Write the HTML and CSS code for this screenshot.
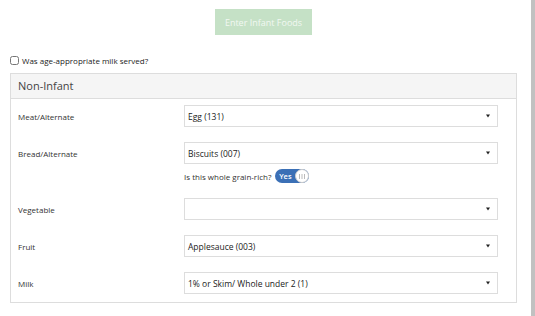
FILE: index.html
```html
<!DOCTYPE html>
<html lang="en">
<head>
    <meta charset="UTF-8">
    <meta name="viewport" content="width=device-width, initial-scale=1.0">
    <title>Meal Components</title>
    <link rel="stylesheet" href="styles.css">
</head>
<body>
    <div class="page">
        <div class="actions">
            <button type="button" class="btn-infant" disabled>Enter Infant Foods</button>
        </div>

        <label class="check">
            <input type="checkbox" id="milk-served">
            <span>Was age-appropriate milk served?</span>
        </label>

        <div class="panel">
            <div class="panel-heading">Non-Infant</div>
            <div class="panel-body">
                <div class="form-row">
                    <label>Meat/Alternate</label>
                    <div class="select"><span>Egg (131)</span><svg class="caret" width="4" height="4" viewBox="0 0 4 4"><path d="M0 0.5H4L2 3.5Z" fill="#222"/></svg></div>
                </div>

                <div class="form-row">
                    <label>Bread/Alternate</label>
                    <div class="select"><span>Biscuits (007)</span><svg class="caret" width="4" height="4" viewBox="0 0 4 4"><path d="M0 0.5H4L2 3.5Z" fill="#222"/></svg></div>
                    <div class="sub">
                        <span>Is this whole grain-rich?</span>
                        <span class="toggle">
                            <span class="toggle-on">Yes</span>
                            <span class="knob"><svg width="6" height="5" viewBox="0 0 6 5"><path d="M0.5 0V5M3 0V5M5.5 0V5" stroke="#aaa" stroke-width="0.8"/></svg></span>
                        </span>
                    </div>
                </div>

                <div class="form-row">
                    <label>Vegetable</label>
                    <div class="select"><span></span><svg class="caret" width="4" height="4" viewBox="0 0 4 4"><path d="M0 0.5H4L2 3.5Z" fill="#222"/></svg></div>
                </div>

                <div class="form-row">
                    <label>Fruit</label>
                    <div class="select"><span>Applesauce (003)</span><svg class="caret" width="4" height="4" viewBox="0 0 4 4"><path d="M0 0.5H4L2 3.5Z" fill="#222"/></svg></div>
                </div>

                <div class="form-row">
                    <label>Milk</label>
                    <div class="select"><span>1% or Skim/ Whole under 2 (1)</span><svg class="caret" width="4" height="4" viewBox="0 0 4 4"><path d="M0 0.5H4L2 3.5Z" fill="#222"/></svg></div>
                </div>
            </div>
        </div>
    </div>
    <div class="scrollbar"></div>
</body>
</html>
```

FILE: styles.css
```css
body {
    margin: 0;
    font-family: "Open Sans", sans-serif;
    color: #333;
    display: flex;
    height: 316px;
    overflow: hidden;
}

.page {
    flex: 1;
    padding: 0 14px 0 10px;
}

.scrollbar {
    width: 4px;
    background-color: #c1c1c1;
}

.actions {
    display: flex;
    justify-content: center;
    padding-top: 9px;
}

.btn-infant {
    width: 97px;
    height: 26px;
    border: none;
    background-color: #c5e1c6;
    color: #f2f8f2;
    font-family: "Open Sans", sans-serif;
    font-size: 9px;
}

.check {
    display: flex;
    align-items: center;
    gap: 3px;
    margin-top: 20px;
    font-size: 8px;
    color: #222;
}

.check input {
    margin: 0;
    width: 9px;
    height: 9px;
}

.panel {
    margin-top: 7px;
    border: 1px solid #ddd;
}

.panel-heading {
    height: 24px;
    line-height: 24px;
    padding-left: 7px;
    background-color: #f5f5f5;
    border-bottom: 1px solid #ddd;
    font-size: 11px;
    color: #444;
}

.panel-body {
    padding: 6px 18px 8px 7px;
}

.form-row {
    display: grid;
    grid-template-columns: 166px 1fr;
    align-items: center;
    margin-bottom: 15px;
}

.form-row:last-child {
    margin-bottom: 0;
}

.form-row label {
    font-size: 8px;
    color: #333;
}

.select {
    height: 22px;
    box-sizing: border-box;
    border: 1px solid #ddd;
    display: flex;
    align-items: center;
    justify-content: space-between;
    padding: 0 7px 0 3px;
    font-size: 8.5px;
    color: #222;
}

.sub {
    grid-column: 2;
    display: flex;
    align-items: center;
    gap: 4px;
    margin-top: 5px;
    font-size: 8px;
    color: #333;
}

.toggle {
    display: inline-flex;
    align-items: center;
    width: 34px;
    height: 14px;
    border-radius: 7px;
    background-color: #3b70b6;
}

.toggle-on {
    flex: 1;
    text-align: center;
    color: #fff;
    font-size: 7.5px;
    font-weight: 600;
}

.knob {
    display: flex;
    align-items: center;
    justify-content: center;
    width: 14px;
    height: 14px;
    box-sizing: border-box;
    border: 1px solid #ccc;
    border-radius: 50%;
    background-color: #fff;
}
```
